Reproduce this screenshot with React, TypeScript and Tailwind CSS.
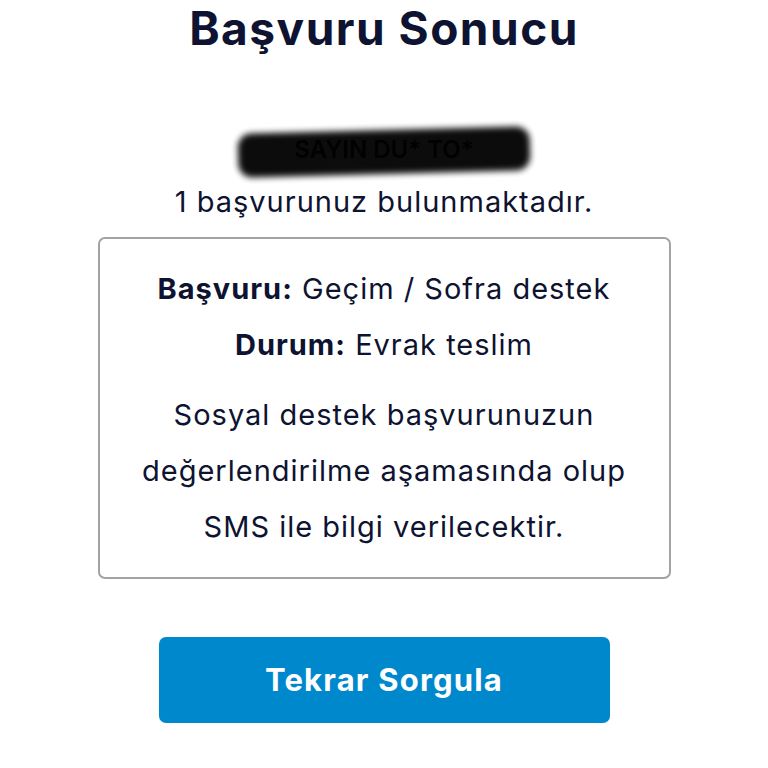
export default function App() {
  return (
    <div
      className="min-h-[768px] w-[768px] bg-white text-[#0d1330] flex flex-col items-center"
      style={{ fontFamily: 'Inter, "Noto Sans", sans-serif' }}
    >
      <h1 className="text-[46px] font-bold leading-[56px] tracking-[1.5px]">Başvuru Sonucu</h1>

      <div className="mt-[72px] relative h-[44px] w-[292px] flex items-center justify-center">
        <span className="text-[24px] font-semibold text-[#222] uppercase">Sayın Du* To*</span>
        <div className="absolute left-0 right-0 top-[2px] bottom-[-2px] bg-black rounded-[14px] blur-[3px] -rotate-[1.5deg] opacity-95" />
      </div>

      <p className="mt-[10px] text-[29px] leading-[40px] tracking-[1px]">1 başvurunuz bulunmaktadır.</p>

      <div className="mt-[15px] w-[573px] border-2 border-[#a3a3a3] rounded-[7px] px-4 pt-[22px] pb-[22px] text-center text-[29px] leading-[56px] tracking-[1px]">
        <p>
          <span className="font-bold">Başvuru:</span> Geçim / Sofra destek
        </p>
        <p>
          <span className="font-bold">Durum:</span> Evrak teslim
        </p>
        <p className="mt-[14px]">
          Sosyal destek başvurunuzun
          <br />
          değerlendirilme aşamasında olup
          <br />
          SMS ile bilgi verilecektir.
        </p>
      </div>

      <button className="mt-[58px] w-[451px] h-[86px] rounded-[7px] bg-[#0088cc] text-white text-[31px] font-bold tracking-[1.2px]">
        Tekrar Sorgula
      </button>
    </div>
  );
}
